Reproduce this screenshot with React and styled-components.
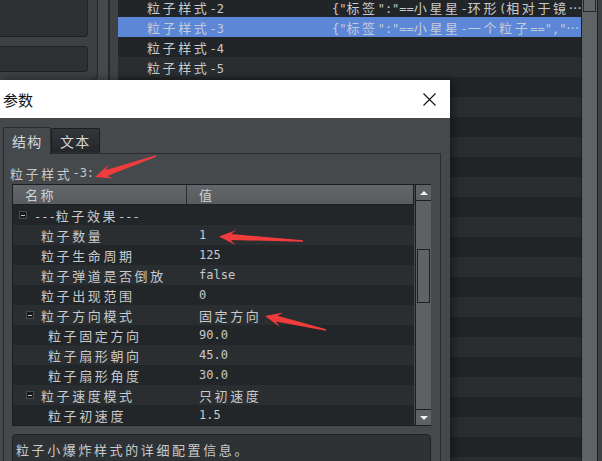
import React from "react";
import styled, { createGlobalStyle } from "styled-components";

const GlobalStyle = createGlobalStyle`
  html, body { margin: 0; padding: 0; background: #3a3d40; }
  body {
    font-family: "DejaVu Sans Mono", "Noto Sans CJK SC", monospace;
    font-size: 12px;
    color: #c8cacc;
  }
  * { box-sizing: border-box; }
`;

const CJK_RE = /([\u2026\u3000-\u303f\u4e00-\u9fff\uff00-\uffef]+)/;

const Cjk = styled.span`
  font-family: "Noto Sans CJK SC", sans-serif;
  font-size: 13px;
  letter-spacing: 2.6px;
`;

const Txt = ({ children }) =>
  String(children)
    .split(CJK_RE)
    .map((part, i) => (i % 2 ? <Cjk key={i}>{part}</Cjk> : part));

/* ---------- background application ---------- */

const Screen = styled.div`
  position: relative;
  width: 602px;
  height: 461px;
  overflow: hidden;
  display: flex;
  background: #3a3d40;
`;

const Sidebar = styled.div`
  flex: none;
  width: 98px;
  height: 80px;
  background: #3d4043;
  border-right: 1px solid #232527;
  border-bottom-right-radius: 6px;
  padding-right: 9px;
  display: flex;
  flex-direction: column;
  gap: 9px;
`;

const SideBox = styled.div`
  height: ${(p) => p.$h}px;
  margin-top: ${(p) => p.$mt || 0}px;
  background: #2e3133;
  border: 1px solid #1f2123;
  border-left: none;
  border-radius: 0 4px 4px 0;
`;

const Splitter = styled.div`
  flex: none;
  width: 20px;
  background: linear-gradient(
    to right,
    #46494c 0 10px,
    #26292b 10px 12px,
    #3f4245 12px
  );
`;

const List = styled.div`
  flex: none;
  width: 463px;
  margin-top: -3px;
  display: flex;
  flex-direction: column;
`;

const ListRow = styled.div`
  flex: none;
  height: 20px;
  display: flex;
  align-items: center;
  white-space: nowrap;
  overflow: hidden;
  color: ${(p) => (p.$tone === "sel" ? "#c4ccd9" : "#c8cacc")};
  background: ${(p) =>
    p.$tone === "sel" ? "#5b87d6" : p.$tone === "light" ? "#2a2d30" : "#222527"};
`;

const ListName = styled.div`
  flex: none;
  width: 214px;
  padding-left: 29px;
`;

const ListValue = styled.div`
  flex: 1;
  overflow: hidden;
`;

const OuterScroll = styled.div`
  flex: none;
  width: 17px;
  height: 100%;
  background: #5e6366;
  border-left: 1px solid #1c1e20;
  border-right: 1px solid #1c1e20;
`;

const OuterThumb = styled.div`
  height: 12px;
  margin: 0 1px;
  border: 1px solid #24272a;
  border-top: none;
  background: #606568;
`;

const Edge = styled.div`
  flex: 1;
  background: #3f4245;
`;

/* ---------- dialog ---------- */

const Dialog = styled.div`
  position: absolute;
  left: 0;
  top: 80px;
  width: 450px;
  height: 400px;
  display: flex;
  flex-direction: column;
  background: #46494c;
  box-shadow: 3px 0 9px rgba(0, 0, 0, 0.45);
  z-index: 1;
`;

const TitleBar = styled.div`
  flex: none;
  height: 38px;
  background: #ffffff;
  display: flex;
  align-items: center;
  justify-content: space-between;
  padding-left: 3px;
`;

const Title = styled.div`
  font-family: "Noto Sans CJK SC", sans-serif;
  font-size: 15px;
  color: #111;
  margin-top: 1px;
`;

const CloseBtn = styled.div`
  width: 42px;
  height: 38px;
  display: flex;
  align-items: center;
  justify-content: center;
`;

const Body = styled.div`
  flex: 1;
  padding: 9px 9px 0 3px;
  display: flex;
  flex-direction: column;
`;

const Tabs = styled.div`
  display: flex;
  align-items: flex-end;
  height: 27px;
  margin-bottom: -1px;
  position: relative;
  z-index: 1;
`;

const Tab = styled.div`
  height: ${(p) => (p.$active ? 27 : 25)}px;
  width: ${(p) => p.$w}px;
  padding-left: ${(p) => p.$pl}px;
  display: flex;
  align-items: center;
  color: #d4d6d8;
  border: 1px solid ${(p) => (p.$active ? "#2a2d2f" : "#1d1f21")};
  border-bottom: ${(p) => (p.$active ? "none" : "1px solid #2a2d2f")};
  border-radius: 2px 2px 0 0;
  background: ${(p) =>
    p.$active ? "#46494c" : "linear-gradient(#34373a, #25282a)"};
  margin-bottom: ${(p) => (p.$active ? 0 : 1)}px;
  & > span { font-size: 14px; letter-spacing: 1.2px; }
`;

const Panel = styled.div`
  flex: 1;
  border: 1px solid #2a2d2f;
  background: #46494c;
  padding: 0 9px 0 8px;
  display: flex;
  flex-direction: column;
`;

const Label = styled.div`
  height: 18px;
  margin: 10px 0 2px -2px;
  display: flex;
  align-items: center;
  color: #c8cacc;
`;

const Tree = styled.div`
  flex: none;
  height: 242px;
  border: 1px solid #1b1d1f;
  display: flex;
  background: #46494c;
`;

const TreeMain = styled.div`
  flex: none;
  width: 401px;
  background: #232628;
  display: flex;
  flex-direction: column;
  overflow: hidden;
`;

const Header = styled.div`
  flex: none;
  height: 20px;
  display: flex;
  background: linear-gradient(#62666a, #585c5f);
  border-bottom: 1px solid #1d1f21;
  border-right: 1px solid #1d1f21;
  color: #cfd1d3;
`;

const HeaderCell = styled.div`
  display: flex;
  align-items: center;
  padding-left: 12px;
  width: ${(p) => (p.$w ? `${p.$w}px` : "auto")};
  flex: ${(p) => (p.$w ? "none" : 1)};
  border-right: ${(p) => (p.$w ? "1px solid #2a2d2f" : "none")};
`;

const Row = styled.div`
  flex: none;
  height: 20px;
  display: flex;
  align-items: center;
  white-space: nowrap;
  background: ${(p) => (p.$light ? "#2b2e31" : "#232628")};
`;

const NameCell = styled.div`
  flex: none;
  width: 174px;
  display: flex;
  align-items: center;
  padding-left: ${(p) => 6 + 7 * p.$level}px;
`;

const ExpSlot = styled.div`
  flex: none;
  width: 15px;
  display: flex;
  align-items: center;
`;

const Expander = styled.div`
  width: 8px;
  height: 8px;
  background: #17191b;
  border: 1px solid #4a4d50;
  display: flex;
  align-items: center;
  justify-content: center;
  &::after {
    content: "";
    width: 4px;
    height: 1px;
    background: #c0c2c4;
  }
`;

const ValueCell = styled.div`
  flex: 1;
  padding-left: 12px;
`;

const TreeScroll = styled.div`
  flex: none;
  width: 16px;
  margin-left: 1px;
  border-left: 1px solid #1d1f21;
  background: #5d6164;
  display: flex;
  flex-direction: column;
`;

const ScrollBtn = styled.div`
  flex: none;
  height: 16px;
  background: #5d6164;
  border-bottom: ${(p) => (p.$up ? "1px solid #1d1f21" : "none")};
  border-top: ${(p) => (p.$up ? "none" : "1px solid #1d1f21")};
  display: flex;
  align-items: center;
  justify-content: center;
  &::after {
    content: "";
    border-left: 4px solid transparent;
    border-right: 4px solid transparent;
    ${(p) =>
      p.$up ? "border-bottom: 4px solid #f2f2f2;" : "border-top: 4px solid #f2f2f2;"}
  }
`;

const Track = styled.div`
  flex: 1;
  padding: 48px 0 0 1px;
`;

const Thumb = styled.div`
  width: 13px;
  height: 54px;
  border: 1px solid #1d1f21;
  background: #5f6366;
`;

const Desc = styled.div`
  margin-top: 8px;
  height: 40px;
  border: 1px solid #1f2123;
  border-radius: 4px;
  background: #2f3235;
  padding: 5px 0 0 3px;
  line-height: 20px;
  color: #c8cacc;
`;

/* ---------- annotation arrows ---------- */

const Overlay = styled.svg`
  position: absolute;
  left: 0;
  top: 0;
  z-index: 2;
  pointer-events: none;
`;

function arrowPoints([tx, ty], [px, py], head = 16, half = 7.5) {
  const dx = px - tx;
  const dy = py - ty;
  const len = Math.hypot(dx, dy);
  const ux = dx / len;
  const uy = dy / len;
  const nx = -uy;
  const ny = ux;
  const at = (d, w) => [px - ux * d + nx * w, py - uy * d + ny * w];
  const pts = [
    [tx + nx * 0.7, ty + ny * 0.7],
    at(head - 4, 3),
    at(head + 1, half),
    [px, py],
    at(head + 1, -half),
    at(head - 4, -3),
    [tx - nx * 0.7, ty - ny * 0.7],
  ];
  return pts.map((p) => p.map((v) => v.toFixed(1)).join(",")).join(" ");
}

const arrows = [
  { tail: [156, 156], tip: [95, 177] },
  { tail: [303, 241], tip: [219, 236.5] },
  { tail: [326, 330], tip: [265, 316] },
];

/* ---------- data ---------- */

const listRows = [
  ["粒子样式-2", '{"标签":"==小星星-环形(相对于镜…'],
  ["粒子样式-3", '{"标签":"==小星星-一个粒子==","…', true],
  ["粒子样式-4", ""],
  ["粒子样式-5", ""],
  ...Array.from({ length: 20 }, () => ["", ""]),
];

const treeRows = [
  { level: 0, exp: true, name: "---粒子效果---", value: "" },
  { level: 1, name: "粒子数量", value: "1" },
  { level: 1, name: "粒子生命周期", value: "125" },
  { level: 1, name: "粒子弹道是否倒放", value: "false" },
  { level: 1, name: "粒子出现范围", value: "0" },
  { level: 1, exp: true, name: "粒子方向模式", value: "固定方向" },
  { level: 2, name: "粒子固定方向", value: "90.0" },
  { level: 2, name: "粒子扇形朝向", value: "45.0" },
  { level: 2, name: "粒子扇形角度", value: "30.0" },
  { level: 1, exp: true, name: "粒子速度模式", value: "只初速度" },
  { level: 2, name: "粒子初速度", value: "1.5" },
];

export default function App() {
  return (
    <>
      <GlobalStyle />
      <Screen>
        <Sidebar>
          <SideBox $h={47} $mt={-10} />
          <SideBox $h={26} />
        </Sidebar>
        <Splitter />
        <List>
          {listRows.map(([name, value, sel], i) => (
            <ListRow key={i} $tone={sel ? "sel" : i % 2 ? "light" : "dark"}>
              <ListName>
                <Txt>{name}</Txt>
              </ListName>
              <ListValue>
                <Txt>{value}</Txt>
              </ListValue>
            </ListRow>
          ))}
        </List>
        <OuterScroll>
          <OuterThumb />
        </OuterScroll>
        <Edge />

        <Dialog>
          <TitleBar>
            <Title>参数</Title>
            <CloseBtn>
              <svg width="13" height="13" viewBox="0 0 13 13">
                <path d="M0.5 0.5 L12.5 12.5 M12.5 0.5 L0.5 12.5" stroke="#111" strokeWidth="1.1" fill="none" />
              </svg>
            </CloseBtn>
          </TitleBar>
          <Body>
            <Tabs>
              <Tab $active $w={48} $pl={8}>
                <Txt>结构</Txt>
              </Tab>
              <Tab $w={49} $pl={8}>
                <Txt>文本</Txt>
              </Tab>
            </Tabs>
            <Panel>
              <Label>
                <Txt>粒子样式-3:</Txt>
              </Label>
              <Tree>
                <TreeMain>
                  <Header>
                    <HeaderCell $w={174}>
                      <Txt>名称</Txt>
                    </HeaderCell>
                    <HeaderCell>
                      <Txt>值</Txt>
                    </HeaderCell>
                  </Header>
                  {treeRows.map((r, i) => (
                    <Row key={i} $light={i % 2 === 1}>
                      <NameCell $level={r.level}>
                        <ExpSlot>{r.exp && <Expander />}</ExpSlot>
                        <span>
                          <Txt>{r.name}</Txt>
                        </span>
                      </NameCell>
                      <ValueCell>
                        <Txt>{r.value}</Txt>
                      </ValueCell>
                    </Row>
                  ))}
                </TreeMain>
                <TreeScroll>
                  <ScrollBtn $up />
                  <Track>
                    <Thumb />
                  </Track>
                  <ScrollBtn />
                </TreeScroll>
              </Tree>
              <Desc>
                <Txt>粒子小爆炸样式的详细配置信息。</Txt>
              </Desc>
            </Panel>
          </Body>
        </Dialog>

        <Overlay width="602" height="461" viewBox="0 0 602 461">
          {arrows.map((a, i) => (
            <polygon key={i} points={arrowPoints(a.tail, a.tip)} fill="#f23b3b" />
          ))}
        </Overlay>
      </Screen>
    </>
  );
}
